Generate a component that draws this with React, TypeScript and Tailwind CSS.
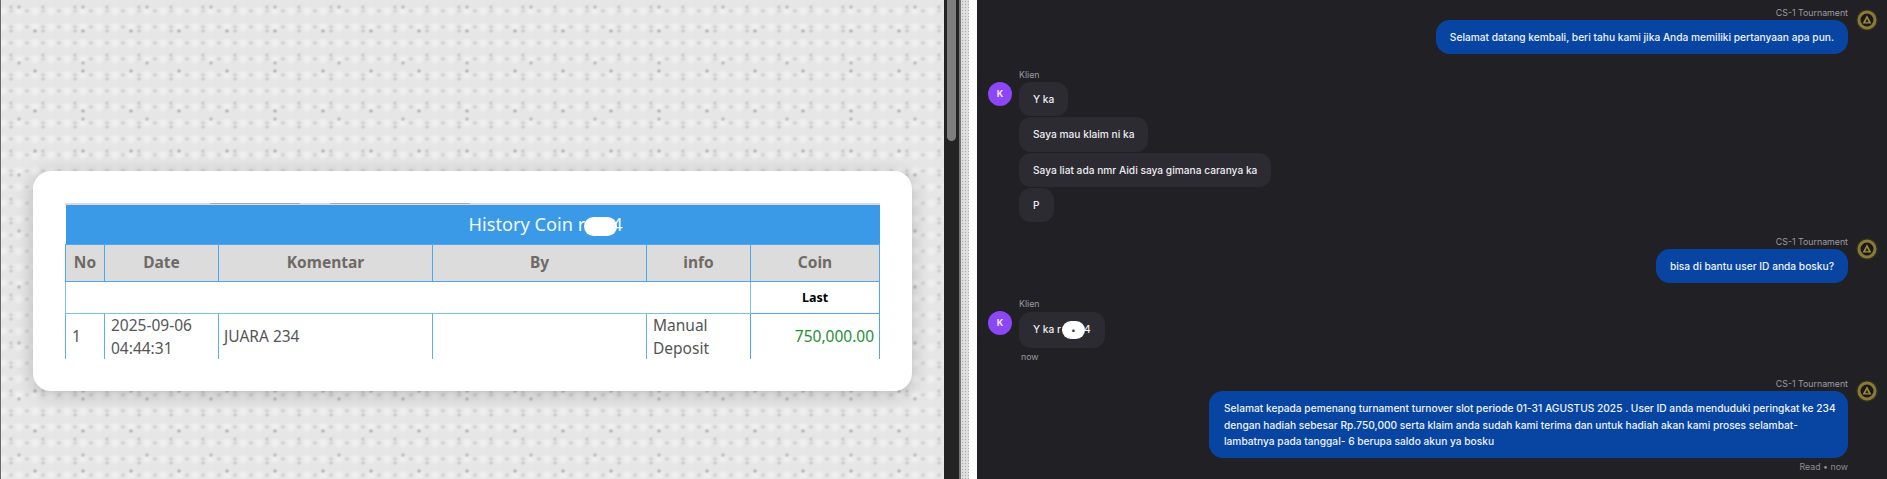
const texture =
  "bg-[#e6e6e6] bg-[radial-gradient(circle,#a9a9a9_0,#cfcfcf_1.5px,transparent_3px),radial-gradient(circle,#b4b4b4_0,#d2d2d2_1.5px,transparent_3px),radial-gradient(circle,#c4c4c4_0,#d8d8d8_1.5px,transparent_3px),radial-gradient(circle,#cdcdcd_0,#dcdcdc_1.5px,transparent_3px),radial-gradient(circle,#f3f3f3_0,transparent_6px)] bg-[size:48px_40px,64px_56px,32px_24px,16px_16px,16px_16px] bg-[position:10px_11px,50px_35px,26px_19px,2px_3px,10px_3px]";

function Avatar() {
  return (
    <svg width="22" height="22" viewBox="0 0 22 22" className="shrink-0 mt-[2px]">
      <circle cx="11" cy="11" r="10.8" fill="#322d1c" />
      <circle cx="11" cy="11" r="8" fill="#1b1913" stroke="#8a7a38" strokeWidth="3" />
      <path d="M11 6.2 L15.4 14.6 H6.6 Z" fill="#a08b45" />
      <path d="M11 9.6 L12.8 13.2 H9.2 Z" fill="#26221a" />
    </svg>
  );
}

function KAvatar() {
  return (
    <div className="w-[24px] h-[24px] rounded-full bg-[#8b46f6] shrink-0 mt-[13px] flex items-center justify-center text-[#f0e8ff] text-[9px] font-bold">
      K
    </div>
  );
}

function Label({ children }: { children: React.ReactNode }) {
  return <div className="text-[8.8px] leading-[12px] text-[#9d9ba3]">{children}</div>;
}

function Agent({ children, top, wide, footer }: { children: React.ReactNode; top: string; wide?: boolean; footer?: boolean }) {
  return (
    <div className={`flex justify-end gap-[8px] ${top}`}>
      <div className="flex flex-col items-end">
        <Label>CS-1 Tournament</Label>
        <div
          className={`mt-[1px] bg-[#0845a3] text-[#eef3fc] rounded-[14px] py-[9px] text-[10.2px] font-medium leading-[16.2px] ${
            wide ? "w-[639px] pl-[15px] pr-[6px]" : "px-[14px]"
          }`}
        >
          {children}
        </div>
        {footer && (
          <div className="mt-[3px] text-[8.8px] leading-[12px] text-[#8f8d95]">Read • now</div>
        )}
      </div>
      <Avatar />
    </div>
  );
}

function ClientBubble({ children }: { children: React.ReactNode }) {
  return (
    <div className="w-fit bg-[#2c2b31] text-[#eeedf2] rounded-[12px] px-[14px] py-[9px] text-[10.2px] font-medium leading-[16.2px]">
      {children}
    </div>
  );
}

export default function App() {
  return (
    <div className="flex w-[1887px] h-[479px] overflow-hidden bg-[#212025] [font-family:Inter,sans-serif]">
      {/* left panel */}
      <div className={`w-[944px] h-full shrink-0 border-l-[1px] border-[#6a6a6a] pt-[171px] pl-[32px] ${texture}`}>
        <div className="w-[879px] h-[220px] rounded-[18px] bg-white pt-[32px] pl-[32px] shadow-[0_3px_18px_rgba(0,0,0,0.22)]">
          <div className="w-[815px] h-[156px] overflow-hidden [font-family:'Noto_Sans',sans-serif]">
            <div className="flex h-[2px] bg-[#dcdcdc]">
              <div className="w-[145px]" />
              <div className="w-[90px] h-[1px] bg-[#a9abb0]" />
              <div className="w-[30px]" />
              <div className="w-[140px] h-[1px] bg-[#a9abb0]" />
            </div>
            <table className="w-[814px] table-fixed border-collapse text-[#555]">
              <colgroup>
                <col className="w-[39px]" />
                <col className="w-[114px]" />
                <col className="w-[214px]" />
                <col className="w-[214px]" />
                <col className="w-[104px]" />
                <col className="w-[129px]" />
              </colgroup>
              <thead>
                <tr className="h-[39px] bg-[#3a9ae8] text-[#f2f8fe]">
                  <th colSpan={6} className="pl-[146px] text-center font-normal text-[18.2px] leading-[24px]">
                    History Coin r
                    <span className="inline-block align-middle w-[33px] h-[19px] rounded-full bg-white -ml-[1px] -mr-[5px]" />
                    4
                  </th>
                </tr>
                <tr className="h-[37px] bg-[#dcdcdc] text-[#6f6a66] text-[15.5px] font-bold">
                  {["No", "Date", "Komentar", "By", "info", "Coin"].map((h) => (
                    <th key={h} className="border border-[#4ea6ec] text-center font-bold">
                      {h}
                    </th>
                  ))}
                </tr>
              </thead>
              <tbody>
                <tr className="h-[32px]">
                  <td colSpan={5} className="border border-[#7dbdf0]" />
                  <td className="border border-[#4ea6ec] pt-[3px] text-center text-[12.5px] font-bold text-black">Last</td>
                </tr>
                <tr className="text-[15.5px] leading-[23px]">
                  <td className="border border-[#5cb0ef] px-[6px]">1</td>
                  <td className="border border-[#5cb0ef] px-[6px]">
                    2025-09-06
                    <br />
                    04:44:31
                  </td>
                  <td className="border border-[#5cb0ef] px-[5px]">JUARA 234</td>
                  <td className="border border-[#5cb0ef]" />
                  <td className="border border-[#4ea6ec] px-[6px]">
                    Manual
                    <br />
                    Deposit
                  </td>
                  <td className="border border-[#4ea6ec] px-[5px] text-right text-[#1f8f35]">750,000.00</td>
                </tr>
              </tbody>
            </table>
          </div>
        </div>
      </div>

      {/* scrollbar */}
      <div className="w-[15px] h-full shrink-0 bg-[#232323] pl-[3px]">
        <div className="w-[9px] h-[141px] rounded-b-[5px] bg-[#7e7e7e]" />
      </div>
      <div className="w-[2px] h-full shrink-0 bg-[#777]" />
      <div className="w-[8px] h-full shrink-0 bg-[#dedede] bg-[radial-gradient(circle,#a8a8a8_0.5px,transparent_1px)] bg-[size:3px_3px]" />
      <div className="w-[8px] h-full shrink-0 bg-white" />

      {/* chat */}
      <div className="flex-1 flex flex-col pl-[11px] pr-[9px] pt-[7px]">
        <Agent top="">Selamat datang kembali, beri tahu kami jika Anda memiliki pertanyaan apa pun.</Agent>

        <div className="flex gap-[7px] mt-[15px]">
          <KAvatar />
          <div>
            <Label>Klien</Label>
            <div className="flex flex-col gap-[1px] mt-[1px]">
              <ClientBubble>Y ka</ClientBubble>
              <ClientBubble>Saya mau klaim ni ka</ClientBubble>
              <ClientBubble>Saya liat ada nmr Aidi saya gimana caranya ka</ClientBubble>
              <ClientBubble>P</ClientBubble>
            </div>
          </div>
        </div>

        <Agent top="mt-[14px]">bisa di bantu user ID anda bosku?</Agent>

        <div className="flex gap-[7px] mt-[15px]">
          <KAvatar />
          <div>
            <Label>Klien</Label>
            <div className="mt-[2px]">
              <ClientBubble>
                Y ka r
                <span className="inline-flex align-middle items-center justify-center w-[23px] h-[18px] rounded-full bg-white text-[#333] text-[8px] ml-[1px] -mr-[1px]">
                  •
                </span>
                4
              </ClientBubble>
            </div>
            <div className="mt-[3px] ml-[2px] text-[8.8px] leading-[12px] text-[#9d9ba3]">now</div>
          </div>
        </div>

        <Agent top="mt-[15px]" wide footer>
          Selamat kepada pemenang turnament turnover slot periode 01-31 AGUSTUS 2025 . User ID anda menduduki peringkat ke 234 dengan hadiah sebesar Rp.750,000 serta klaim anda sudah kami terima dan untuk hadiah akan kami proses selambat-lambatnya pada tanggal- 6 berupa saldo akun ya bosku
        </Agent>
      </div>
    </div>
  );
}
